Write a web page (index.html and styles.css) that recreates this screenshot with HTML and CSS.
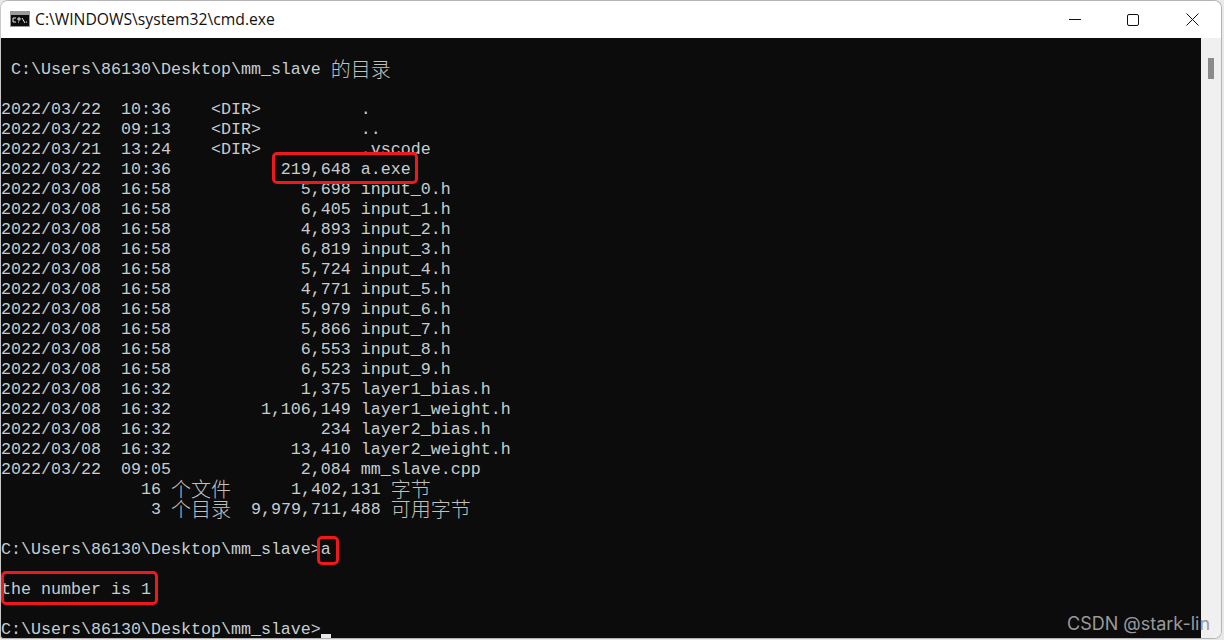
FILE: index.html
```html
<!DOCTYPE html>
<html lang="zh">
<head>
<meta charset="utf-8">
<title>cmd.exe</title>
<link rel="stylesheet" href="styles.css">
</head>
<body>
<div class="window">
  <header class="titlebar">
    <svg class="app-icon" width="20" height="16" viewBox="0 0 20 16">
      <rect width="20" height="16" fill="#9a9a9a"/>
      <rect x="1" y="4" width="18" height="11" fill="#0c0c0c"/>
      <path d="M3 7h3M3 7v4M3 11h3M8 7h2v2H8zM8 11h1M12 7l3 5M16 11h1" stroke="#e8e8e8" stroke-width="1" fill="none"/>
    </svg>
    <span class="title">C:\WINDOWS\system32\cmd.exe</span>
    <div class="controls">
      <svg class="ctl" width="58" height="37" viewBox="0 0 58 37"><path d="M22 18.500h12" stroke="#111" stroke-width="1"/></svg>
      <svg class="ctl" width="58" height="37" viewBox="0 0 58 37"><rect x="22.500" y="13.500" width="11" height="11" rx="1.500" fill="none" stroke="#111" stroke-width="1"/></svg>
      <svg class="ctl" width="58" height="37" viewBox="0 0 58 37"><path d="M23.500 12.500l12 12M35.500 12.500l-12 12" stroke="#111" stroke-width="1"/></svg>
    </div>
  </header>
  <div class="body">
    <pre class="console">

 C:\Users\86130\Desktop\mm_slave <span class="cjk">的目录</span>

2022/03/22  10:36    &lt;DIR&gt;          .
2022/03/22  09:13    &lt;DIR&gt;          ..
2022/03/21  13:24    &lt;DIR&gt;          .vscode
2022/03/22  10:36           219,648 a.exe
2022/03/08  16:58             5,698 input_0.h
2022/03/08  16:58             6,405 input_1.h
2022/03/08  16:58             4,893 input_2.h
2022/03/08  16:58             6,819 input_3.h
2022/03/08  16:58             5,724 input_4.h
2022/03/08  16:58             4,771 input_5.h
2022/03/08  16:58             5,979 input_6.h
2022/03/08  16:58             5,866 input_7.h
2022/03/08  16:58             6,553 input_8.h
2022/03/08  16:58             6,523 input_9.h
2022/03/08  16:32             1,375 layer1_bias.h
2022/03/08  16:32         1,106,149 layer1_weight.h
2022/03/08  16:32               234 layer2_bias.h
2022/03/08  16:32            13,410 layer2_weight.h
2022/03/22  09:05             2,084 mm_slave.cpp
              16 <span class="cjk">个文件</span>      1,402,131 <span class="cjk">字节</span>
               3 <span class="cjk">个目录</span>  9,979,711,488 <span class="cjk">可用字节</span>

C:\Users\86130\Desktop\mm_slave&gt;a

the number is 1

C:\Users\86130\Desktop\mm_slave&gt;<span class="cursor"></span></pre>
    <div class="scrollbar"><div class="thumb"></div></div>
  </div>
  <div class="mark mark-exe"></div>
  <div class="mark mark-a"></div>
  <div class="mark mark-num"></div>
  <div class="watermark">CSDN @stark-lin</div>
</div>
</body>
</html>
```
FILE: styles.css
```css
html, body {
  margin: 0;
  padding: 0;
  width: 1224px;
  height: 640px;
  overflow: hidden;
  background: #e9e9e9;
}
.window {
  position: relative;
  box-sizing: border-box;
  width: 1222px;
  height: 639px;
  display: flex;
  flex-direction: column;
  border: 1px solid #b4b4b4;
  border-left-color: #c8c8c8;
  border-radius: 8px 8px 8px 3px;
  overflow: hidden;
  background: #fff;
}
.titlebar {
  flex: 0 0 37px;
  display: flex;
  align-items: center;
  background: #fff;
  padding-left: 9px;
}
.app-icon {
  flex: none;
  margin-right: 5px;
  margin-top: -1px;
}
.title {
  font: 15.7px/20px "Open Sans", "Noto Sans", sans-serif;
  color: #111;
  margin-top: -2px;
}
.controls {
  margin-left: auto;
  display: flex;
}
.ctl { display: block; }
.body {
  flex: 1;
  display: flex;
  min-height: 0;
}
.console {
  flex: 1;
  margin: 0;
  padding: 2px 0 0;
  overflow: hidden;
  background: #0c0c0c;
  color: #c8ccce;
  font: 16.667px/20px "Liberation Mono", monospace;
}
.cjk {
  display: inline-block;
  vertical-align: top;
  height: 20px;
  margin-top: -1px;
  font-family: "Noto Sans CJK SC", sans-serif;
  font-size: 20px;
  line-height: 20px;
  font-weight: 300;
  color: #c0c0c0;
}
.cursor {
  display: inline-block;
  vertical-align: -4px;
  width: 10px;
  height: 4px;
  background: #e8e8e8;
}
.scrollbar {
  flex: 0 0 20px;
  background: #f0f0f0;
  padding: 20px 0 0 7px;
  box-sizing: border-box;
}
.thumb {
  width: 6px;
  height: 21px;
  background: #8b8b8b;
}
.mark {
  position: absolute;
  box-sizing: border-box;
  border: 3px solid #f0181c;
  border-radius: 5px;
}
.mark-exe { left: 271px; top: 151px; width: 146px; height: 32px; }
.mark-a { left: 316px; top: 535px; width: 22px; height: 29px; }
.mark-num { left: 0; top: 570px; width: 157px; height: 34px; }
.watermark {
  position: absolute;
  left: 1066px;
  top: 611px;
  font: 18px/24px "Inter", "Liberation Sans", sans-serif;
  color: #9a9a9a;
  white-space: nowrap;
}
```
